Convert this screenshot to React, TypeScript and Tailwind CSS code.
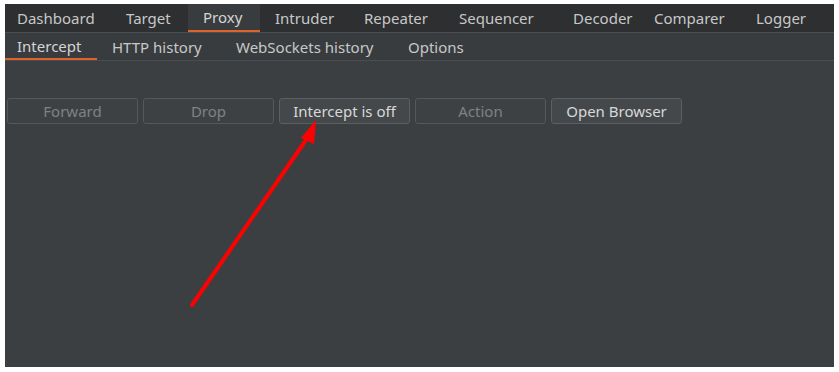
const topTabs = [
  { label: "Dashboard", w: "w-[106px] pl-[12px]" },
  { label: "Target", w: "w-[77px] pl-[15px]" },
  { label: "Proxy", w: "w-[72px] pl-[15px]" },
  { label: "Intruder", w: "w-[89px] pl-[15px]" },
  { label: "Repeater", w: "w-[95px] pl-[15px]" },
  { label: "Sequencer", w: "w-[114px] pl-[15px]" },
  { label: "Decoder", w: "w-[81px] pl-[15px]" },
  { label: "Comparer", w: "w-[102px] pl-[15px]" },
  { label: "Logger", w: "w-[80px] pl-[15px]" },
];

const subTabs = [
  { label: "Intercept", w: "w-[92px] pl-[12px]" },
  { label: "HTTP history", w: "w-[124px] pl-[15px]" },
  { label: "WebSockets history", w: "w-[172px] pl-[15px]" },
  { label: "Options", w: "w-[80px] pl-[15px]" },
];

const buttons = [
  { label: "Forward", enabled: false },
  { label: "Drop", enabled: false },
  { label: "Intercept is off", enabled: true },
  { label: "Action", enabled: false },
  { label: "Open Browser", enabled: true },
];

export default function App() {
  return (
    <div className="w-[839px] h-[372px] bg-white pt-[4px] pl-[5px] pr-[5px] pb-[5px]" style={{ fontFamily: "'Noto Sans', 'Open Sans', sans-serif" }}>
      <div className="relative flex flex-col w-full h-full bg-[#3c3f41]">
        {/* Main tabs */}
        <div className="flex h-[29px] bg-[#2d2f31] border-b border-[#4b4e51]">
          {topTabs.map((t) => (
            <div
              key={t.label}
              className={
                t.label === "Proxy"
                  ? `${t.w} flex items-center pt-[1px] text-[15px] text-[#d4d4d4] bg-[#393c3f] border-b-2 border-[#e0622b]`
                  : `${t.w} flex items-center pt-[1px] text-[15px] text-[#c8c8c8]`
              }
            >
              {t.label}
            </div>
          ))}
        </div>

        {/* Sub tabs */}
        <div className="flex h-[28px] bg-[#393c3e] border-b border-[#4b4e51]">
          {subTabs.map((t) => (
            <div
              key={t.label}
              className={
                t.label === "Intercept"
                  ? `${t.w} flex items-center pt-[1px] text-[15px] text-[#d4d4d4] border-b-2 border-[#e0622b]`
                  : `${t.w} flex items-center pt-[1px] text-[15px] text-[#c8c8c8]`
              }
            >
              {t.label}
            </div>
          ))}
        </div>

        {/* Toolbar */}
        <div className="flex gap-[5px] pl-[2px] mt-[37px]">
          {buttons.map((b) => (
            <div
              key={b.label}
              className={
                b.enabled
                  ? "w-[131px] h-[26px] flex items-center justify-center rounded-[3px] border border-[#5c5f62] bg-[#45484b] text-[15px] text-[#d8d8d8]"
                  : "w-[131px] h-[26px] flex items-center justify-center rounded-[3px] border border-[#55585b] bg-[#3e4143] text-[15px] text-[#7f8284]"
              }
            >
              {b.label}
            </div>
          ))}
        </div>

        {/* Annotation arrow */}
        <svg className="absolute left-0 top-0 pointer-events-none" width="829" height="363">
          <line x1="187" y1="301" x2="303" y2="133" stroke="#ff0000" strokeWidth="4" strokeLinecap="round" />
          <polygon points="311,116 296,134 309,140" fill="#ff0000" />
        </svg>
      </div>
    </div>
  );
}
